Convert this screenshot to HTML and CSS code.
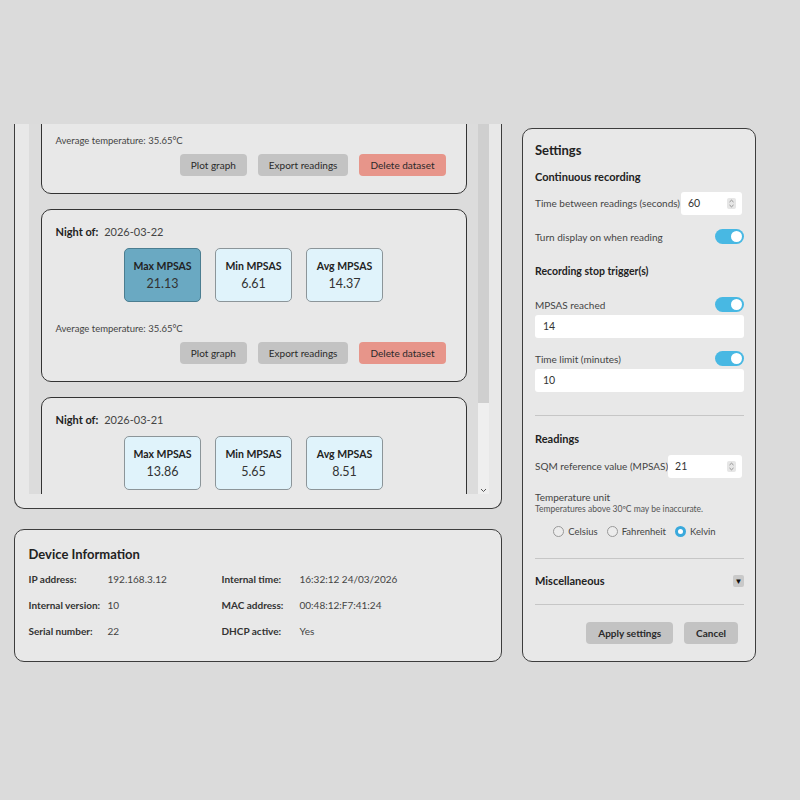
FILE: index.html
```html
<!DOCTYPE html>
<html lang="en">
<head>
    <meta charset="UTF-8">
    <meta name="viewport" content="width=device-width, initial-scale=1.0">
    <title>SQM Dashboard</title>
    <link rel="stylesheet" href="styles.css">
</head>
<body>
    <div class="page">
        <div class="left-col">
            <section class="panel history">
                <div class="history-inner">
                    <div class="night-list">
                        <div class="night-card first">
                            <div class="night-title"><b>Night of:</b> <span>2026-03-23</span></div>
                            <div class="stats">
                                <div class="stat"><div class="stat-label">Max MPSAS</div><div class="stat-value">20.02</div></div>
                                <div class="stat"><div class="stat-label">Min MPSAS</div><div class="stat-value">6.10</div></div>
                                <div class="stat"><div class="stat-label">Avg MPSAS</div><div class="stat-value">13.40</div></div>
                            </div>
                            <div class="avg-temp">Average temperature: 35.65°C</div>
                            <div class="card-actions">
                                <button class="btn">Plot graph</button>
                                <button class="btn">Export readings</button>
                                <button class="btn btn-danger">Delete dataset</button>
                            </div>
                        </div>

                        <div class="night-card">
                            <div class="night-title"><b>Night of:</b> <span>2026-03-22</span></div>
                            <div class="stats">
                                <div class="stat stat-best"><div class="stat-label">Max MPSAS</div><div class="stat-value">21.13</div></div>
                                <div class="stat"><div class="stat-label">Min MPSAS</div><div class="stat-value">6.61</div></div>
                                <div class="stat"><div class="stat-label">Avg MPSAS</div><div class="stat-value">14.37</div></div>
                            </div>
                            <div class="avg-temp">Average temperature: 35.65°C</div>
                            <div class="card-actions">
                                <button class="btn">Plot graph</button>
                                <button class="btn">Export readings</button>
                                <button class="btn btn-danger">Delete dataset</button>
                            </div>
                        </div>

                        <div class="night-card">
                            <div class="night-title"><b>Night of:</b> <span>2026-03-21</span></div>
                            <div class="stats">
                                <div class="stat"><div class="stat-label">Max MPSAS</div><div class="stat-value">13.86</div></div>
                                <div class="stat"><div class="stat-label">Min MPSAS</div><div class="stat-value">5.65</div></div>
                                <div class="stat"><div class="stat-label">Avg MPSAS</div><div class="stat-value">8.51</div></div>
                            </div>
                            <div class="avg-temp">Average temperature: 34.90°C</div>
                            <div class="card-actions">
                                <button class="btn">Plot graph</button>
                                <button class="btn">Export readings</button>
                                <button class="btn btn-danger">Delete dataset</button>
                            </div>
                        </div>
                    </div>
                    <div class="scrollbar">
                        <div class="scroll-thumb"></div>
                        <div class="scroll-track">
                            <svg class="scroll-arrow" width="7" height="5" viewBox="0 0 7 5"><path d="M1 1 L3.5 3.5 L6 1" fill="none" stroke="#555" stroke-width="1"/></svg>
                        </div>
                    </div>
                </div>
            </section>

            <section class="panel device">
                <h2>Device Information</h2>
                <div class="device-grid">
                    <div class="dev-label">IP address:</div><div class="dev-value">192.168.3.12</div>
                    <div class="dev-label">Internal time:</div><div class="dev-value">16:32:12 24/03/2026</div>
                    <div class="dev-label">Internal version:</div><div class="dev-value">10</div>
                    <div class="dev-label">MAC address:</div><div class="dev-value">00:48:12:F7:41:24</div>
                    <div class="dev-label">Serial number:</div><div class="dev-value">22</div>
                    <div class="dev-label">DHCP active:</div><div class="dev-value">Yes</div>
                </div>
            </section>
        </div>

        <aside class="panel settings">
            <h2>Settings</h2>
            <h3 class="sec-continuous">Continuous recording</h3>

            <div class="set-row row-interval">
                <span>Time between readings (seconds)</span>
                <div class="num-input small"><span>60</span>
                    <svg class="spin" width="9" height="11" viewBox="0 0 9 11"><rect x="0" y="0" width="9" height="11" rx="2" fill="#e6e6e6"/><path d="M2.5 4 L4.5 2.2 L6.5 4 M2.5 7 L4.5 8.8 L6.5 7" fill="none" stroke="#888" stroke-width="0.9"/></svg>
                </div>
            </div>

            <div class="set-row row-display">
                <span>Turn display on when reading</span>
                <span class="toggle on"></span>
            </div>

            <h4 class="sec-stop">Recording stop trigger(s)</h4>

            <div class="set-row row-mpsas">
                <span>MPSAS reached</span>
                <span class="toggle on"></span>
            </div>
            <div class="text-input">14</div>

            <div class="set-row row-limit">
                <span>Time limit (minutes)</span>
                <span class="toggle on"></span>
            </div>
            <div class="text-input">10</div>

            <hr class="divider div-1">

            <h3 class="sec-readings">Readings</h3>

            <div class="set-row row-sqm">
                <span>SQM reference value (MPSAS)</span>
                <div class="num-input wide"><span>21</span>
                    <svg class="spin" width="9" height="11" viewBox="0 0 9 11"><rect x="0" y="0" width="9" height="11" rx="2" fill="#e6e6e6"/><path d="M2.5 4 L4.5 2.2 L6.5 4 M2.5 7 L4.5 8.8 L6.5 7" fill="none" stroke="#888" stroke-width="0.9"/></svg>
                </div>
            </div>

            <div class="unit-label">Temperature unit</div>
            <div class="unit-note">Temperatures above 30ºC may be inaccurate.</div>
            <div class="radios">
                <label class="radio"><span class="dot"></span>Celsius</label>
                <label class="radio"><span class="dot"></span>Fahrenheit</label>
                <label class="radio checked"><span class="dot"></span>Kelvin</label>
            </div>

            <hr class="divider div-2">

            <div class="set-row row-misc">
                <h3>Miscellaneous</h3>
                <span class="expand">▼</span>
            </div>

            <hr class="divider div-3">

            <div class="settings-actions">
                <button class="btn btn-strong">Apply settings</button>
                <button class="btn btn-strong">Cancel</button>
            </div>
        </aside>
    </div>
</body>
</html>
```

FILE: styles.css
```css
* { box-sizing: border-box; }
body {
    margin: 0;
    background: #dbdbdb;
    font-family: Lato, "Open Sans", sans-serif;
    color: #333;
}
.page {
    display: grid;
    grid-template-columns: 488px 234px;
    column-gap: 20px;
    align-items: start;
    padding: 124px 0 0 14px;
}
.panel {
    background: #e8e8e8;
    border: 1.5px solid #3d3d3d;
    border-radius: 10px;
}
h2 { margin: 0; font-size: 13px; line-height: 18px; font-weight: 700; color: #222; }
h3, h4 { margin: 0; font-size: 11px; line-height: 16px; font-weight: 700; color: #222; }
h4 { font-size: 10.5px; }

/* history */
.left-col { display: flex; flex-direction: column; gap: 20px; }
.history {
    height: 385px;
    border-top: none;
    border-radius: 0 0 10px 10px;
    padding: 0 12.5px 13.5px 13.5px;
}
.history-inner { display: flex; height: 370px; background: #dcdcdc; }
.night-list { flex: 1; overflow: hidden; padding: 0 11px 0 12px; }
.night-card {
    background: #e8e8e8;
    border: 1.5px solid #333;
    border-radius: 10px;
    padding: 14px 20px 17px 14px;
    margin-bottom: 15px;
}
.night-card.first { margin-top: -103px; }
.night-title { font-size: 11px; line-height: 16px; color: #222; }
.night-title span { color: #444; margin-left: 3px; }
.stats { display: flex; justify-content: center; gap: 14px; margin-top: 8px; padding-left: 6px; }
.stat {
    width: 77px; height: 54px;
    background: #e0f3fb;
    border: 1px solid #8c9599;
    border-radius: 5px;
    text-align: center;
    padding-top: 10px;
}
.stat-best { background: #6aa9c2; border-color: #4b7d90; }
.stat-label { font-size: 10.5px; line-height: 15px; font-weight: 700; color: #222; }
.stat-value { font-size: 12.5px; line-height: 18px; color: #333; margin-top: 1px; }
.avg-temp { margin-top: 20px; font-size: 9.5px; line-height: 14px; color: #444; }
.card-actions { display: flex; justify-content: flex-end; gap: 11px; margin-top: 6px; }
.btn {
    height: 22px;
    padding: 0 11px;
    border: none;
    border-radius: 4px;
    background: #c3c3c3;
    font-family: inherit;
    font-size: 10px;
    color: #2a2a2a;
    cursor: pointer;
}
.btn-danger { background: #e7958a; }
.scrollbar { width: 11px; display: flex; flex-direction: column; }
.scroll-thumb { height: 279px; background: #cfcfcf; }
.scroll-track {
    flex: 1; background: #efefef;
    display: flex; align-items: flex-end; justify-content: center;
    padding-bottom: 1px;
}

/* device */
.device { height: 133px; padding: 14.5px 13.5px 0; }
.device-grid {
    display: grid;
    grid-template-columns: 79px 114px 78px 1fr;
    row-gap: 10px;
    margin-top: 8px;
    font-size: 10px; line-height: 16px;
}
.dev-label { font-weight: 700; color: #333; }
.dev-value { color: #444; }

/* settings */
.settings { height: 534px; margin-top: 4px; padding: 11.5px 11px 0 12px; font-size: 10px; }
.set-row { display: flex; align-items: center; justify-content: space-between; color: #444; line-height: 16px; white-space: nowrap; }
.sec-continuous { margin-top: 10px; }
.row-interval { margin-top: 7px; height: 23px; }
.row-display { margin-top: 14px; }
.sec-stop { margin-top: 18px; }
.row-mpsas { margin-top: 18px; }
.row-limit { margin-top: 13px; }
.text-input {
    margin-top: 2px; height: 23px;
    background: #fff; border-radius: 3px;
    padding: 0 8px; line-height: 23px; color: #333; font-size: 10.5px;
}
.num-input {
    height: 23px; background: #fff; border-radius: 3px;
    display: flex; align-items: center; justify-content: space-between;
    padding: 0 6px 0 7px; color: #333; font-size: 10.5px;
}
.num-input.small { width: 61px; margin-right: 2px; }
.num-input.wide { width: 75px; margin-right: 2px; }
.toggle {
    width: 29px; height: 15px; border-radius: 8px;
    background: #48b8e3; position: relative;
}
.toggle::after {
    content: ""; position: absolute; top: 2px; right: 2px;
    width: 11px; height: 11px; border-radius: 50%; background: #fff;
}
.divider { border: none; border-top: 1px solid #c6c6c6; margin: 0; }
.div-1 { margin-top: 23px; }
.sec-readings { margin-top: 15px; }
.row-sqm { margin-top: 8px; height: 23px; }
.unit-label { margin-top: 13px; line-height: 13px; color: #444; }
.unit-note { font-size: 8.5px; line-height: 10px; color: #555; white-space: nowrap; }
.radios { display: flex; justify-content: center; gap: 9px; margin-top: 11px; padding-right: 10px; line-height: 14px; font-size: 9.5px; color: #444; }
.radio { display: flex; align-items: center; gap: 4px; }
.dot { width: 11px; height: 11px; border-radius: 50%; border: 1px solid #999; background: #ececec; }
.radio.checked .dot { border: 3px solid #3aa9dc; background: #fff; }
.div-2 { margin-top: 19px; }
.row-misc { margin-top: 14px; }
.expand {
    width: 11px; height: 12px; border-radius: 2px;
    background: #c9c9c9; color: #111;
    font-size: 8px; line-height: 12px; text-align: center;
}
.div-3 { margin-top: 15px; }
.settings-actions { display: flex; justify-content: flex-end; gap: 11px; margin-top: 17px; padding-right: 6px; }
.btn-strong { font-weight: 700; padding: 0 12px; }
```
